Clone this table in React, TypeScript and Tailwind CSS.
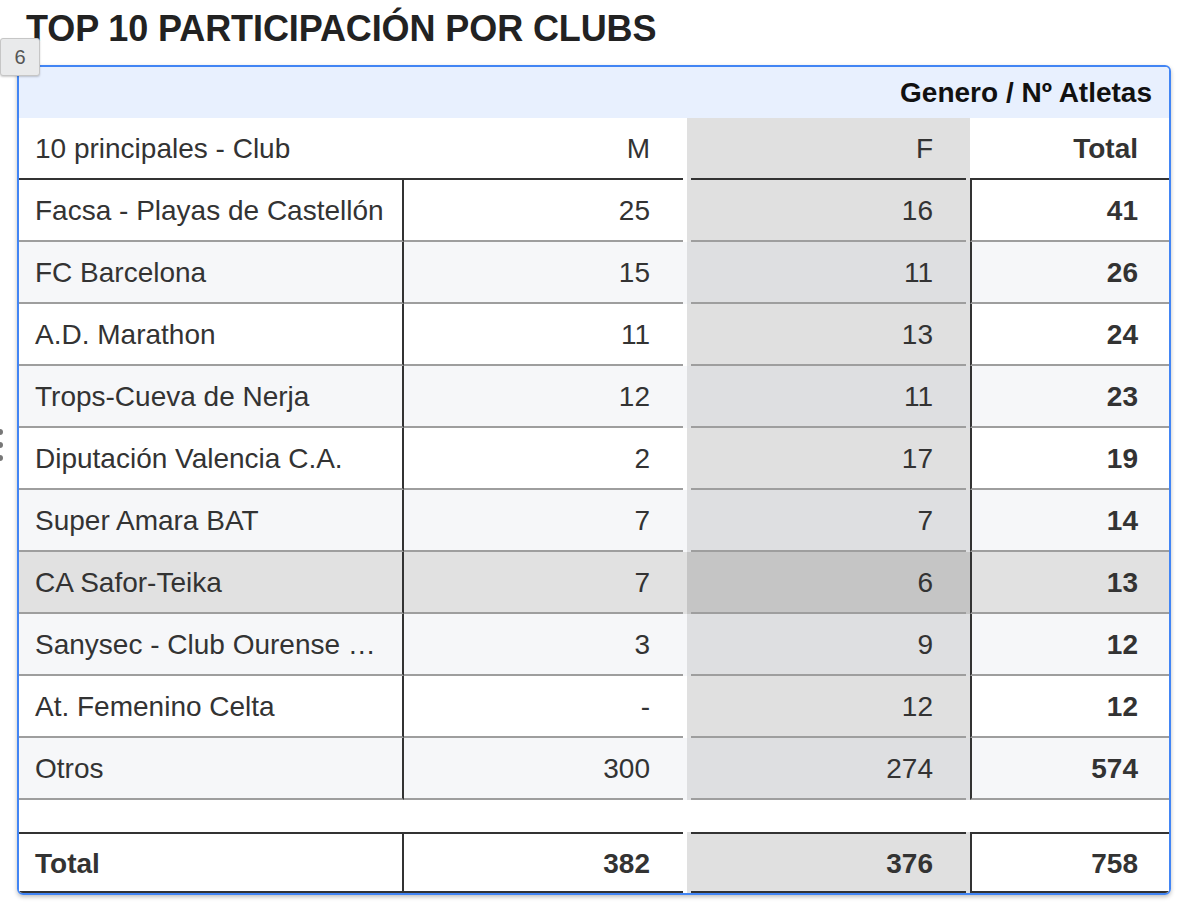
import React from "react";

type RowData = {
  club: string;
  m: string;
  f: string;
  t: string;
  bg: string;
  fbg: string;
};

const rows: RowData[] = [
  { club: "Facsa - Playas de Castellón", m: "25", f: "16", t: "41", bg: "bg-white", fbg: "bg-[#e0e0e0]" },
  { club: "FC Barcelona", m: "15", f: "11", t: "26", bg: "bg-[#f6f7f9]", fbg: "bg-[#dedfe1]" },
  { club: "A.D. Marathon", m: "11", f: "13", t: "24", bg: "bg-white", fbg: "bg-[#e0e0e0]" },
  { club: "Trops-Cueva de Nerja", m: "12", f: "11", t: "23", bg: "bg-[#f6f7f9]", fbg: "bg-[#dedfe1]" },
  { club: "Diputación Valencia C.A.", m: "2", f: "17", t: "19", bg: "bg-white", fbg: "bg-[#e0e0e0]" },
  { club: "Super Amara BAT", m: "7", f: "7", t: "14", bg: "bg-[#f6f7f9]", fbg: "bg-[#dedfe1]" },
  { club: "CA Safor-Teika", m: "7", f: "6", t: "13", bg: "bg-[#e1e1e1]", fbg: "bg-[#c5c5c5]" },
  { club: "Sanysec - Club Ourense …", m: "3", f: "9", t: "12", bg: "bg-[#f6f7f9]", fbg: "bg-[#dedfe1]" },
  { club: "At. Femenino Celta", m: "-", f: "12", t: "12", bg: "bg-white", fbg: "bg-[#e0e0e0]" },
  { club: "Otros", m: "300", f: "274", t: "574", bg: "bg-[#f6f7f9]", fbg: "bg-[#dedfe1]" },
];

function Row({ r }: { r: RowData }) {
  return (
    <div className={`flex h-[62px] ${r.bg}`}>
      <div className="w-[385px] min-w-0 border-r-2 border-b-2 border-r-[#333] border-b-[#9e9e9e] flex items-center pl-4 pr-4 pt-[2px] whitespace-nowrap">
        {r.club}
      </div>
      <div className="w-[283px] pr-[4px]">
        <div className="h-full border-b-2 border-b-[#9e9e9e] flex items-center justify-end pr-[33px] pt-[2px]">{r.m}</div>
      </div>
      <div className={`w-[283px] px-[4px] ${r.fbg}`}>
        <div className="h-full border-b-2 border-b-[#9e9e9e] flex items-center justify-end pr-[33px] pt-[2px]">{r.f}</div>
      </div>
      <div className="flex-1 border-l-2 border-b-2 border-l-[#333] border-b-[#9e9e9e] flex items-center justify-end pr-[31px] pt-[2px] font-bold">
        {r.t}
      </div>
    </div>
  );
}

export default function App() {
  return (
    <div className="relative w-[1192px] h-[914px] bg-white overflow-hidden font-['Liberation_Sans',Arial,sans-serif] text-[#333]">
      <div className="pl-[26px] pt-[11px] h-[47px] text-[36px] leading-[36px] font-bold tracking-[-0.1px] text-[#222] whitespace-nowrap">
        TOP 10 PARTICIPACIÓN POR CLUBS
      </div>

      <div className="ml-[17px] mt-[18px] w-[1154px] border-2 border-[#4285f4] rounded-[6px] overflow-hidden shadow-[0_2px_4px_rgba(0,0,0,0.25)] text-[28px] leading-[32px]">
        <div className="h-[51px] bg-[#e8f0fe] flex items-center justify-end pr-[17px] pt-[1px] font-bold text-[#111]">
          Genero / Nº Atletas
        </div>

        <div className="flex h-[62px] bg-white">
          <div className="w-[385px] border-b-2 border-b-[#333] flex items-center pl-4 pt-[2px]">10 principales - Club</div>
          <div className="w-[283px] pr-[4px]">
            <div className="h-full border-b-2 border-b-[#333] flex items-center justify-end pr-[33px] pt-[2px]">M</div>
          </div>
          <div className="w-[283px] px-[4px] bg-[#e0e0e0]">
            <div className="h-full border-b-2 border-b-[#333] flex items-center justify-end pr-[33px] pt-[2px]">F</div>
          </div>
          <div className="flex-1 border-b-2 border-b-[#333] flex items-center justify-end pr-[31px] pt-[2px] font-bold">Total</div>
        </div>

        {rows.map((r) => (
          <Row key={r.club} r={r} />
        ))}

        <div className="h-[32px] bg-white" />

        <div className="flex h-[61px] bg-white font-bold">
          <div className="w-[385px] border-t-2 border-b-2 border-r-2 border-[#333] flex items-center pl-4 pt-[2px]">Total</div>
          <div className="w-[283px] pr-[4px]">
            <div className="h-full border-t-2 border-b-2 border-[#333] flex items-center justify-end pr-[33px] pt-[2px]">382</div>
          </div>
          <div className="w-[283px] px-[4px] bg-[#e0e0e0]">
            <div className="h-full border-t-2 border-b-2 border-[#333] flex items-center justify-end pr-[33px] pt-[2px]">376</div>
          </div>
          <div className="flex-1 border-t-2 border-b-2 border-l-2 border-[#333] flex items-center justify-end pr-[31px] pt-[2px]">758</div>
        </div>
      </div>

      <div className="absolute left-0 top-[38px] w-[40px] h-[38px] bg-[#e9eaeb] border border-[#c6c6c6] rounded-[3px] shadow-[0_1px_2px_rgba(0,0,0,0.2)] flex items-center justify-center text-[20px] text-[#555]">
        6
      </div>

      <div className="absolute left-[-3px] top-[429px] flex flex-col gap-[7px]">
        <div className="w-[6px] h-[6px] rounded-full bg-[#777]" />
        <div className="w-[6px] h-[6px] rounded-full bg-[#777]" />
        <div className="w-[6px] h-[6px] rounded-full bg-[#777]" />
      </div>
    </div>
  );
}
